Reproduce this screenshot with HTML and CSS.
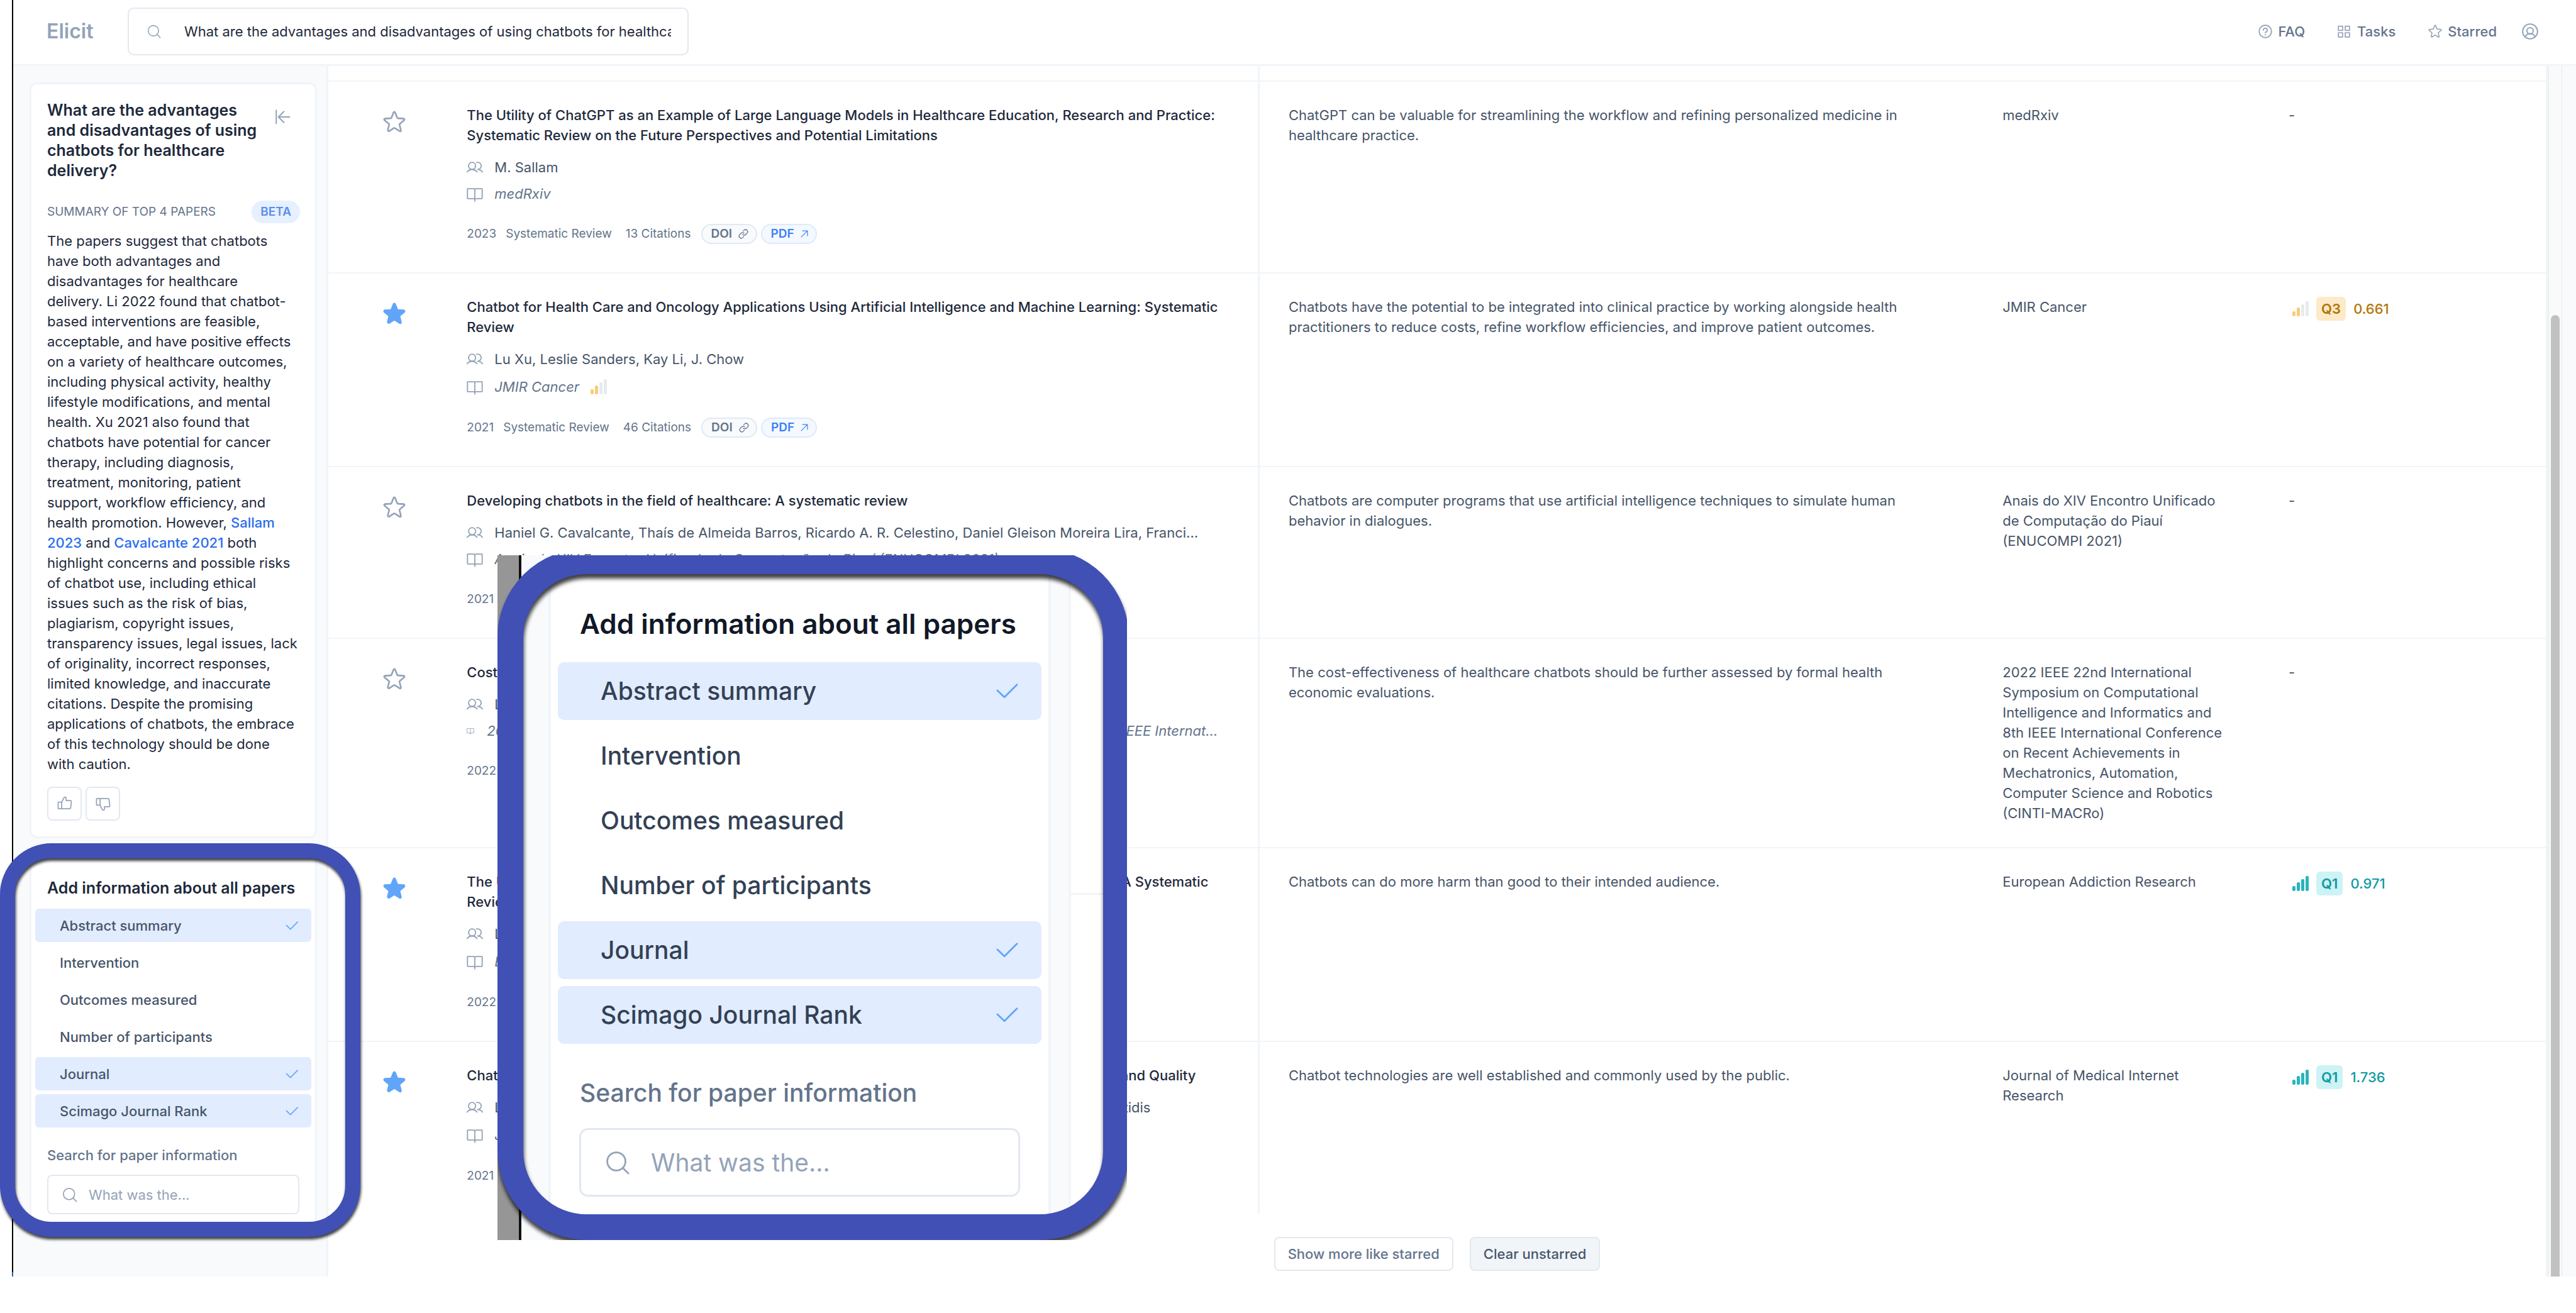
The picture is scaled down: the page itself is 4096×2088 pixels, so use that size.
FILE: index.html
```html
<!DOCTYPE html>
<html lang="en">
<head>
<meta charset="utf-8">
<title>Elicit</title>
<link rel="stylesheet" href="styles.css">
</head>
<body>
<svg class="sprite" aria-hidden="true">
  <symbol id="i-search" viewBox="0 0 256 256"><circle cx="116" cy="116" r="88"/><path d="M178 178l54 54"/></symbol>
  <symbol id="i-star" viewBox="12 12 232 232"><path d="M132.4,190.4l50.4,32c6.5,4.1,14.5-2,12.6-9.5l-14.6-57.4a8.7,8.7,0,0,1,2.9-8.8l45.2-37.7c5.9-4.9,2.9-14.8-4.8-15.3l-59-3.8a8.3,8.3,0,0,1-7.3-5.4l-22-55.4a8.3,8.3,0,0,0-15.6,0l-22,55.4a8.3,8.3,0,0,1-7.3,5.4l-59,3.8c-7.7.5-10.7,10.4-4.8,15.3L72.3,146.7a8.7,8.7,0,0,1,2.9,8.8L61.7,208.7c-2.3,9,7.3,16.3,15,11.4l46.9-29.7A8.2,8.2,0,0,1,132.4,190.4Z"/></symbol>
  <symbol id="i-users" viewBox="8 8 240 240"><circle cx="88" cy="108" r="52"/><path d="M155.4,57.9A54.5,54.5,0,0,1,169.5,56a52,52,0,0,1,0,104M16,197.4a88,88,0,0,1,144,0M169.5,160a87.9,87.9,0,0,1,72,37.4"/></symbol>
  <symbol id="i-book" viewBox="8 8 240 240"><path d="M128,76a20,20,0,0,1,20-20h84a4,4,0,0,1,4,4V196a4,4,0,0,1-4,4H148a20,20,0,0,0-20,20M20,196a4,4,0,0,0,4,4H108a20,20,0,0,1,20,20V76a20,20,0,0,0-20-20H24a4,4,0,0,0-4,4ZM128,216v20"/></symbol>
  <symbol id="i-check" viewBox="0 0 256 256"><path d="M226 66L104 188L36 122"/></symbol>
  <symbol id="i-thumb" viewBox="0 0 256 256"><path d="M32,104H80V208H32a8,8,0,0,1-8-8V112A8,8,0,0,1,32,104ZM80,104l36-70a14,14,0,0,1,12-8a24,24,0,0,1,22,24V80h66a15.900,15.900,0,0,1,15.800,18l-12,96a16,16,0,0,1-15.800,14H80"/></symbol>
  <symbol id="i-thumb-down" viewBox="0 0 256 256"><g transform="matrix(1 0 0 -1 0 256)"><path d="M32,104H80V208H32a8,8,0,0,1-8-8V112A8,8,0,0,1,32,104ZM80,104l36-70a14,14,0,0,1,12-8a24,24,0,0,1,22,24V80h66a15.900,15.900,0,0,1,15.800,18l-12,96a16,16,0,0,1-15.800,14H80"/></g></symbol>
  <symbol id="i-collapse" viewBox="0 0 256 256"><path d="M22 24V232M232 128H56M142 42L56 128L142 214"/></symbol>
  <symbol id="i-link" viewBox="24 24 208 208"><path d="M122.3,71.4l19.8-19.8a44.100,44.100,0,0,1,62.300,62.300l-28.300,28.200a43.900,43.900,0,0,1-62.200,0M133.700,184.600l-19.800,19.800a44.100,44.100,0,0,1-62.300-62.300l28.300-28.200a43.900,43.900,0,0,1,62.200,0"/></symbol>
  <symbol id="i-out" viewBox="40 40 176 176"><path d="M56 200L200 56M84 56H200V172"/></symbol>
  <symbol id="i-help" viewBox="20 20 216 216"><circle cx="128" cy="128" r="96"/><path d="M128,148v-10a30,30,0,1,0-30-30"/><circle class="dot" cx="128" cy="180" r="11"/></symbol>
  <symbol id="i-grid" viewBox="28 28 200 200"><path d="M40 44h68v68H40zM148 44h68v68h-68zM40 148h68v68H40zM148 148h68v68h-68z"/></symbol>
  <symbol id="i-user" viewBox="20 20 216 216"><circle cx="128" cy="128" r="98"/><circle cx="128" cy="120" r="42"/><path d="M62,200a72,72,0,0,1,132,0"/></symbol>
  <symbol id="i-bars" viewBox="0 0 26 24"><rect class="b1" x="0" y="16" width="5" height="8" rx="2"/><rect class="b2" x="7" y="10" width="5" height="14" rx="2"/><rect class="b3" x="14" y="5" width="5" height="19" rx="2"/><rect class="b4" x="21" y="0" width="5" height="24" rx="2"/></symbol>
</svg>

<div class="app">
  <header class="topbar">
    <a class="brand" href="#">Elicit</a>
    <label class="search">
      <svg class="icon"><use href="#i-search"/></svg>
      <input class="search-input" type="text" aria-label="Question" value="What are the advantages and disadvantages of using chatbots for healthcare delivery?">
    </label>
    <nav class="nav">
      <a class="nav-link" href="#"><svg class="icon"><use href="#i-help"/></svg>FAQ</a>
      <a class="nav-link nav-link--grid" href="#"><svg class="icon"><use href="#i-grid"/></svg>Tasks</a>
      <a class="nav-link" href="#"><svg class="icon"><use href="#i-star"/></svg>Starred</a>
      <a class="nav-account" href="#" aria-label="Account"><svg class="icon"><use href="#i-user"/></svg></a>
    </nav>
  </header>

  <div class="body">
    <aside class="sidebar">
      <section class="card summary">
        <div class="summary-head">
          <h1 class="summary-title">What are the advantages and disadvantages of using chatbots for healthcare delivery?</h1>
          <button class="collapse" type="button" aria-label="Collapse"><svg class="icon"><use href="#i-collapse"/></svg></button>
        </div>
        <div class="summary-label"><span>SUMMARY OF TOP 4 PAPERS</span><span class="beta">BETA</span></div>
        <p class="summary-text">The papers suggest that chatbots have both advantages and disadvantages for healthcare<br>delivery. Li 2022 found that chatbot-based interventions are feasible, acceptable, and have positive effects on a variety of healthcare outcomes, including physical activity, healthy lifestyle modifications, and mental health. Xu 2021 also found that chatbots have potential for cancer therapy, including diagnosis, treatment, monitoring, patient<br>support, workflow efficiency, and health promotion. However, <a href="#">Sallam 2023</a> and <a href="#">Cavalcante 2021</a> both highlight concerns and possible risks of chatbot use, including ethical issues such as the risk of bias, plagiarism, copyright issues, transparency issues, legal issues, lack of originality, incorrect responses, limited knowledge, and inaccurate citations. Despite the promising applications of chatbots, the embrace of this technology should be done with caution.</p>
        <div class="votes">
          <button class="vote" type="button" aria-label="Helpful"><svg class="icon"><use href="#i-thumb"/></svg></button>
          <button class="vote" type="button" aria-label="Not helpful"><svg class="icon"><use href="#i-thumb-down"/></svg></button>
        </div>
      </section>

      <div class="spotlight">
        <section class="card panel">
          <h2 class="panel-title">Add information about all papers</h2>
          <div class="options">
            <button class="option option--on" type="button">Abstract summary<svg class="icon"><use href="#i-check"/></svg></button>
            <button class="option" type="button">Intervention</button>
            <button class="option" type="button">Outcomes measured</button>
            <button class="option" type="button">Number of participants</button>
            <button class="option option--on" type="button">Journal<svg class="icon"><use href="#i-check"/></svg></button>
            <button class="option option--on" type="button">Scimago Journal Rank<svg class="icon"><use href="#i-check"/></svg></button>
          </div>
          <label class="panel-label" for="info-a">Search for paper information</label>
          <div class="panel-search"><svg class="icon"><use href="#i-search"/></svg><input id="info-a" type="text" placeholder="What was the..."></div>
        </section>
      </div>
    </aside>

    <main class="results">
      <table class="papers">
        <colgroup><col class="c-star"><col class="c-paper"><col class="c-abstract"><col class="c-journal"><col class="c-rank"></colgroup>
        <tbody>
        <tr class="strip"><td></td><td class="paper"></td><td></td><td></td><td></td></tr>
        <tr>
          <td class="star"><button type="button" aria-label="Star"><svg class="icon"><use href="#i-star"/></svg></button></td>
          <td class="paper">
            <h3>The Utility of ChatGPT as an Example of Large Language Models in Healthcare Education, Research and Practice: Systematic Review on the Future Perspectives and Potential Limitations</h3>
            <p class="line authors"><svg class="icon"><use href="#i-users"/></svg>M. Sallam</p>
            <p class="line journal"><svg class="icon"><use href="#i-book"/></svg><i>medRxiv</i></p>
            <div class="meta"><span>2023</span><span>Systematic Review</span><span class="cites">13 Citations</span><span class="chips"><a class="chip" href="#">DOI<svg class="icon"><use href="#i-link"/></svg></a><a class="chip chip--pdf" href="#">PDF<svg class="icon"><use href="#i-out"/></svg></a></span></div>
          </td>
          <td>ChatGPT can be valuable for streamlining the workflow and refining personalized medicine in healthcare practice.</td>
          <td>medRxiv</td>
          <td>-</td>
        </tr>
        <tr>
          <td class="star star--on"><button type="button" aria-label="Unstar"><svg class="icon"><use href="#i-star"/></svg></button></td>
          <td class="paper">
            <h3>Chatbot for Health Care and Oncology Applications Using Artificial Intelligence and Machine Learning: Systematic Review</h3>
            <p class="line authors"><svg class="icon"><use href="#i-users"/></svg>Lu Xu, Leslie Sanders, Kay Li, J. Chow</p>
            <p class="line journal journal--ranked"><svg class="icon"><use href="#i-book"/></svg><i>JMIR Cancer</i><svg class="bars bars--q3"><use href="#i-bars"/></svg></p>
            <div class="meta"><span>2021</span><span>Systematic Review</span><span class="cites">46 Citations</span><span class="chips"><a class="chip" href="#">DOI<svg class="icon"><use href="#i-link"/></svg></a><a class="chip chip--pdf" href="#">PDF<svg class="icon"><use href="#i-out"/></svg></a></span></div>
          </td>
          <td>Chatbots have the potential to be integrated into clinical practice by working alongside health practitioners to reduce costs, refine workflow efficiencies, and improve patient outcomes.</td>
          <td>JMIR Cancer</td>
          <td><div class="rank rank--q3"><svg class="bars bars--q3"><use href="#i-bars"/></svg><span class="quartile">Q3</span>0.661</div></td>
        </tr>
        <tr>
          <td class="star"><button type="button" aria-label="Star"><svg class="icon"><use href="#i-star"/></svg></button></td>
          <td class="paper">
            <h3>Developing chatbots in the field of healthcare: A systematic review</h3>
            <p class="line authors"><svg class="icon"><use href="#i-users"/></svg>Haniel G. Cavalcante, Thaís de Almeida Barros, Ricardo A. R. Celestino, Daniel Gleison Moreira Lira, Franci...</p>
            <p class="line journal"><svg class="icon"><use href="#i-book"/></svg><i>Anais do XIV Encontro Unificado de Computação do Piauí (ENUCOMPI 2021)</i></p>
            <div class="meta"><span>2021</span></div>
          </td>
          <td>Chatbots are computer programs that use artificial intelligence techniques to simulate human behavior in dialogues.</td>
          <td>Anais do XIV Encontro Unificado de Computação do Piauí (ENUCOMPI 2021)</td>
          <td>-</td>
        </tr>
        <tr>
          <td class="star"><button type="button" aria-label="Star"><svg class="icon"><use href="#i-star"/></svg></button></td>
          <td class="paper">
            <h3>Cost-effectiveness of Healthcare Chatbots</h3>
            <p class="line authors"><svg class="icon"><use href="#i-users"/></svg>L. Lima</p>
            <p class="line journal journal--long"><svg class="icon"><use href="#i-book"/></svg><i>2022 IEEE 22nd International Symposium on Computational Intelligence and Informatics and 8th IEEE Internat...</i></p>
            <div class="meta"><span>2022</span></div>
          </td>
          <td>The cost-effectiveness of healthcare chatbots should be further assessed by formal health economic evaluations.</td>
          <td>2022 IEEE 22nd International Symposium on Computational Intelligence and Informatics and 8th IEEE International Conference on Recent Achievements in Mechatronics, Automation, Computer Science and Robotics (CINTI-MACRo)</td>
          <td>-</td>
        </tr>
        <tr>
          <td class="star star--on"><button type="button" aria-label="Unstar"><svg class="icon"><use href="#i-star"/></svg></button></td>
          <td class="paper">
            <h3>The Use of Chatbots as Supportive Agents for People Seeking Help with Substance Use Disorders: A Systematic Review</h3>
            <p class="line authors"><svg class="icon"><use href="#i-users"/></svg>L. Ogilvie, J. Prescott, J. Carson</p>
            <p class="line journal journal--ranked"><svg class="icon"><use href="#i-book"/></svg><i>European Addiction Research</i></p>
            <div class="meta"><span>2022</span></div>
          </td>
          <td>Chatbots can do more harm than good to their intended audience.</td>
          <td>European Addiction Research</td>
          <td><div class="rank rank--q1"><svg class="bars bars--q1"><use href="#i-bars"/></svg><span class="quartile">Q1</span>0.971</div></td>
        </tr>
        <tr>
          <td class="star star--on"><button type="button" aria-label="Unstar"><svg class="icon"><use href="#i-star"/></svg></button></td>
          <td class="paper">
            <h3>Chatbots for Health Care Delivery: A Systematic Review of Their Efficacy, Outcomes, Acceptability and Quality</h3>
            <p class="line authors"><svg class="icon"><use href="#i-users"/></svg>Leonidas Papadopoulos, Eleni Georgiou, Maria Nikolaidou, Panagiotis Bamidis, Konstantinos Kostidis</p>
            <p class="line journal journal--ranked"><svg class="icon"><use href="#i-book"/></svg><i>Journal of Medical Internet Research</i></p>
            <div class="meta"><span>2021</span></div>
          </td>
          <td>Chatbot technologies are well established and commonly used by the public.</td>
          <td>Journal of Medical Internet Research</td>
          <td><div class="rank rank--q1"><svg class="bars bars--q1"><use href="#i-bars"/></svg><span class="quartile">Q1</span>1.736</div></td>
        </tr>
        </tbody>
      </table>
      <div class="actions">
        <button class="action" type="button">Show more like starred</button>
        <button class="action action--filled" type="button">Clear unstarred</button>
      </div>
    </main>
    <div class="scrollbar"><div class="thumb"></div></div>
    <div class="edge"></div>
  </div>
</div>

<div class="magnifier">
  <div class="mag-gutter"></div>
  <div class="mag-side">
    <section class="card panel panel--large">
      <h2 class="panel-title">Add information about all papers</h2>
      <div class="options">
        <button class="option option--on" type="button">Abstract summary<svg class="icon"><use href="#i-check"/></svg></button>
        <button class="option" type="button">Intervention</button>
        <button class="option" type="button">Outcomes measured</button>
        <button class="option" type="button">Number of participants</button>
        <button class="option option--on" type="button">Journal<svg class="icon"><use href="#i-check"/></svg></button>
        <button class="option option--on" type="button">Scimago Journal Rank<svg class="icon"><use href="#i-check"/></svg></button>
      </div>
      <label class="panel-label" for="info-b">Search for paper information</label>
      <div class="panel-search"><svg class="icon"><use href="#i-search"/></svg><input id="info-b" type="text" placeholder="What was the..."></div>
    </section>
  </div>
  <div class="mag-main"></div>
</div>
</body>
</html>
```
FILE: styles.css
```css
:root {
  --ink: #1e293b;
  --text: #475569;
  --muted: #64748b;
  --soft: #94a3b8;
  --line: #f1f5f9;
  --edge: #e2e8f0;
  --pale: #f8fafc;
  --blue: #60a5fa;
  --ring: #4050b5;
}

* { box-sizing: border-box; }

body {
  position: relative;
  margin: 0;
  padding: 0 0 58px 19px;
  min-height: 100vh;
  display: flex;
  background: #fff;
  color: var(--text);
  font: 400 22px/32px Inter, "Liberation Sans", sans-serif;
}

h1, h2, h3, p { margin: 0; }
a { text-decoration: none; color: inherit; }
button, input { font: inherit; color: inherit; }
button { cursor: pointer; }
input { border: 0; outline: 0; background: none; padding: 0; min-width: 0; }

.sprite { position: absolute; width: 0; height: 0; }
.icon {
  flex: none;
  display: block;
  width: 26px;
  height: 26px;
  fill: none;
  stroke: var(--soft);
  stroke-width: 17;
  stroke-linecap: round;
  stroke-linejoin: round;
}
.dot { fill: var(--soft); stroke: none; }

.app {
  flex: 1;
  display: flex;
  flex-direction: column;
  border-left: 2px solid #000;
  border-image: linear-gradient(to bottom, #000 calc(100% - 9px), #1f62b0 0) 2;
}

/* Top bar */
.topbar {
  display: flex;
  align-items: center;
  height: 105px;
  padding: 0 60px 3px 53px;
  border-bottom: 3px solid var(--line);
}
.brand { width: 129px; font-size: 32px; font-weight: 600; color: var(--soft); }
.search {
  display: flex;
  align-items: center;
  width: 892px;
  height: 76px;
  padding: 0 26px 0 28px;
  gap: 36px;
  border: 2px solid var(--edge);
  border-radius: 10px;
}
.search .icon { width: 24px; height: 24px; }
.search-input { flex: 1; color: var(--ink); }
.nav { margin-left: auto; display: flex; align-items: center; color: var(--muted); font-weight: 500; }
.nav-link { display: flex; align-items: center; gap: 9px; margin-right: 52px; }
.nav-link .icon { width: 22px; height: 22px; }
.nav-link--grid { gap: 11px; }
.nav-link--grid .icon { width: 20px; height: 20px; }
.nav-account { margin-left: -12px; }

/* Sidebar */
.body { flex: 1; display: flex; }
.sidebar {
  flex: none;
  width: 501px;
  padding: 26px 15px 0 26px;
  display: flex;
  flex-direction: column;
  gap: 20px;
  background: var(--pale);
  border-right: 3px solid var(--line);
}
.card { background: #fff; border: 3px solid var(--line); border-radius: 12px; }
.summary { padding: 25px 24px 25px 25px; }
.summary-head { display: flex; justify-content: space-between; align-items: flex-start; color: var(--ink); }
.summary-title { width: 345px; font-size: 25px; line-height: 32px; font-weight: 600; }
.collapse { margin: 14px 14px 0 0; padding: 0; border: 0; background: none; }
.collapse .icon { stroke-width: 20; }
.summary-label {
  display: flex;
  align-items: center;
  justify-content: space-between;
  margin-top: 32px;
  height: 36px;
  font-size: 19px;
  color: var(--muted);
}
.beta { padding: 2px 14px; border-radius: 18px; background: #e6f0fe; color: #5b8def; font-weight: 600; }
.summary-text { margin-top: 12px; color: var(--ink); }
.summary-text a { color: #2a6cf0; font-weight: 500; }
.votes { display: flex; gap: 6px; margin-top: 20px; }
.vote {
  display: grid;
  place-items: center;
  width: 55px;
  height: 54px;
  padding: 0;
  border: 2px solid var(--edge);
  border-radius: 8px;
  background: #fff;
}

/* Column picker */
.panel { padding: 40px 6px 25px; }
.panel-title { margin: 0 19px 17px; font-size: 25px; font-weight: 600; color: var(--ink); white-space: nowrap; }
.options { display: grid; gap: 6px; font-weight: 500; }
.option {
  display: flex;
  align-items: center;
  justify-content: space-between;
  height: 53px;
  padding: 0 19px 0 39px;
  border: 0;
  border-radius: 6px;
  background: none;
  text-align: left;
  font-weight: 500;
}
.option--on { background: #e1ecff; }
.option .icon { stroke: var(--blue); width: 24px; height: 24px; }
.panel-label { display: block; margin: 28px 19px 15px; color: var(--muted); font-weight: 500; }
.panel-search {
  display: flex;
  align-items: center;
  gap: 17px;
  height: 63px;
  margin: 0 19px;
  padding: 0 21px;
  border: 2px solid var(--edge);
  border-radius: 8px;
}
.panel-search input { flex: 1; }
.panel-search input::placeholder { color: var(--soft); opacity: 1; }

.spotlight { position: relative; z-index: 1; }
.spotlight::after {
  content: "";
  position: absolute;
  inset: -12px -69px -8px -47px;
  border: 24px solid var(--ring);
  border-radius: 82px;
  filter: drop-shadow(1px 4px 2px rgba(0, 0, 0, .75));
  pointer-events: none;
}

/* Results */
.results { flex: 1; border-right: 4px solid var(--line); }
.papers { width: 100%; table-layout: fixed; border-collapse: separate; border-spacing: 0; }
.c-star { width: 5%; }
.c-paper { width: 37%; }
.c-abstract { width: 32.2%; }
.c-journal { width: 12.9%; }
.papers td { padding: 37px 46px 38px; vertical-align: top; border-bottom: 2px solid var(--line); }
.papers .strip td { height: 25px; padding: 0; }
.papers tr:last-child td { border-bottom: 0; }
.papers td.paper { padding-left: 44px; border-right: 3px solid var(--line); }
.papers td.star { padding: 46px 0 0; }
.star button { display: block; margin-left: 87px; width: 36px; padding: 0; border: 0; background: none; }
.star .icon { width: 36px; height: 36px; }
.star--on .icon { fill: var(--blue); stroke: var(--blue); }
.paper h3 { font-size: 22px; font-weight: 500; color: var(--ink); }
.line { display: flex; align-items: center; gap: 18px; white-space: nowrap; }
.authors { margin-top: 19px; }
.journal { margin-top: 10px; color: var(--muted); }
.journal--ranked { height: 35px; }
.journal--long { gap: 20px; }
.journal--long .icon { width: 12px; height: 12px; }
.meta {
  display: flex;
  align-items: center;
  gap: 15px;
  height: 32px;
  margin: 32px 0 7px;
  font-size: 19px;
  color: var(--muted);
}
.cites { margin-left: 7px; }
.chips { display: flex; gap: 6px; margin-left: 1px; }
.chip {
  display: flex;
  align-items: center;
  gap: 10px;
  width: 89px;
  height: 32px;
  padding: 0 14px;
  border: 2px solid var(--edge);
  border-radius: 16px;
  background: var(--pale);
  font-weight: 600;
}
.chip .icon { width: 16px; height: 16px; stroke: var(--muted); }
.chip--pdf { border-color: #dbeafe; background: #f4f8ff; color: #3b82f6; }
.chip--pdf .icon { width: 12px; height: 12px; stroke: #3b82f6; }

.bars { flex: none; width: 26px; height: 24px; fill: #27b5bd; }
.bars--q3 { --high: #e5ebee; fill: #fbcb75; }
.b3, .b4 { fill: var(--high, #27b5bd); }
.rank { display: flex; align-items: center; gap: 12px; height: 38px; margin-left: 6px; font-weight: 500; color: #0d9aa3; }
.rank--q3 { color: #b07608; }
.quartile { padding: 3px 8px; border-radius: 6px; background: #cdf3f5; font-weight: 600; }
.rank--q3 .quartile { background: #fdeac8; }

.actions { display: flex; justify-content: center; gap: 26px; margin-top: 36px; }
.action {
  height: 54px;
  padding: 0 20px;
  border: 2px solid var(--edge);
  border-radius: 8px;
  background: #fff;
  color: var(--muted);
  font-weight: 500;
}
.action--filled { background: var(--line); color: var(--text); }

.scrollbar {
  flex: none;
  display: flex;
  flex-direction: column;
  width: 22px;
  padding: 396px 3px 0;
  border: solid #e8e8e8;
  border-width: 0 1px;
  background: #fafafa;
}
.thumb { flex: 1; border-radius: 7px 7px 0 0; background: #c1c1c1; }
.edge { flex: none; width: 22px; background: var(--pale); }

/* Enlarged view of the column picker */
.magnifier {
  position: absolute;
  z-index: 2;
  left: 791px;
  top: 883px;
  width: 1001px;
  height: 1089px;
  display: flex;
  overflow: hidden;
}
.magnifier::after {
  content: "";
  position: absolute;
  inset: -11px -3px 0 0;
  border: 41px solid var(--ring);
  border-radius: 142px;
  filter: drop-shadow(1px 7px 3px rgba(0, 0, 0, .75));
  pointer-events: none;
}
.mag-gutter { flex: none; width: 38px; background: #969696; border-right: 4px solid #111; }
.mag-side { flex: none; width: 874px; padding: 0 28px 0 43px; background: var(--pale); border-right: 4px solid var(--line); }
.mag-main { flex: 1; background: #fff; }
.mag-main::before { content: ""; display: block; height: 537px; border-bottom: 3px solid var(--line); }
.panel--large { height: 100%; border-width: 0 4px; border-radius: 0; padding: 81px 11px 0; font-size: 39px; line-height: 56px; color: #334155; }
.panel--large .panel-title { margin: 0 35px 33px; font-size: 44px; color: #111827; }
.panel--large .options { gap: 11px; }
.panel--large .option { height: 92px; padding: 0 34px 0 68px; border-radius: 10px; }
.panel--large .option .icon { width: 42px; height: 42px; }
.panel--large .panel-label { margin: 50px 35px 28px; }
.panel--large .panel-search { height: 109px; margin: 0 34px; padding: 0 37px; gap: 32px; border-width: 3px; border-radius: 14px; }
.panel--large .panel-search .icon { width: 42px; height: 42px; }
```
